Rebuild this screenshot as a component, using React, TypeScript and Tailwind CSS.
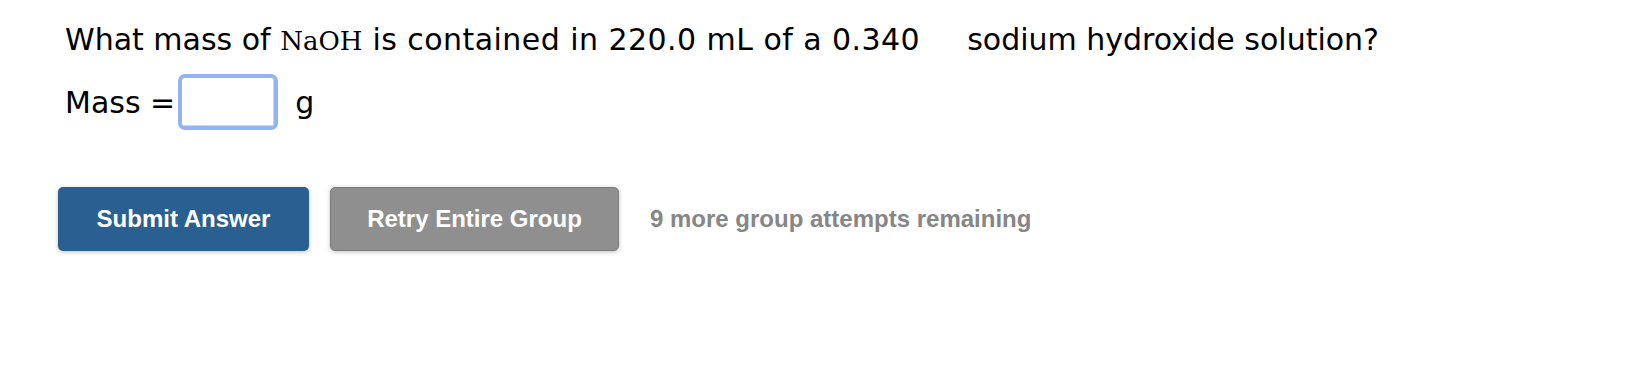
import React from "react";

export default function App() {
  return (
    <div className="w-[1640px] h-[367px] bg-white pl-[58px] pt-[22px]">
      <div className="pl-[7px] text-[30px] leading-[36px] text-black whitespace-nowrap" style={{ fontFamily: '"DejaVu Sans", Verdana, sans-serif' }}>
        <span>What mass of </span>
        <span className="text-[26px]" style={{ fontFamily: '"DejaVu Serif", "Liberation Serif", serif' }}>NaOH</span>
        <span className="tracking-[0.45px]"> is contained in 220.0 mL of a 0.340</span>
        <span className="inline-block w-[47px]"></span>
        <span>sodium hydroxide solution?</span>
      </div>
      <div className="pl-[7px] mt-[15px] flex items-center text-[30px] text-black" style={{ fontFamily: '"DejaVu Sans", Verdana, sans-serif' }}>
        <span>Mass =</span>
        <div className="ml-[3px] w-[100px] h-[56px] rounded-[7px] border-[4px] border-[#93b3f2] bg-white">
          <div className="w-full h-full border border-[#d4d4d4] border-t-0 border-l-0 rounded-[2px]"></div>
        </div>
        <span className="ml-[17px]">g</span>
      </div>
      <div className="mt-[57px] flex items-center" style={{ fontFamily: '"Liberation Sans", Arial, sans-serif' }}>
        <button className="w-[251px] h-[64px] rounded-[5px] bg-[#2a5f92] text-white font-bold text-[24px] shadow-[0_1px_4px_rgba(0,0,0,0.25)]">
          Submit Answer
        </button>
        <button className="ml-[21px] w-[289px] h-[64px] rounded-[5px] bg-[#8f8f8f] border border-[#7d7d7d] text-white font-bold text-[24px] shadow-[0_1px_4px_rgba(0,0,0,0.25)]">
          Retry Entire Group
        </button>
        <span className="ml-[31px] text-[#868686] font-bold text-[24px]">9 more group attempts remaining</span>
      </div>
    </div>
  );
}
